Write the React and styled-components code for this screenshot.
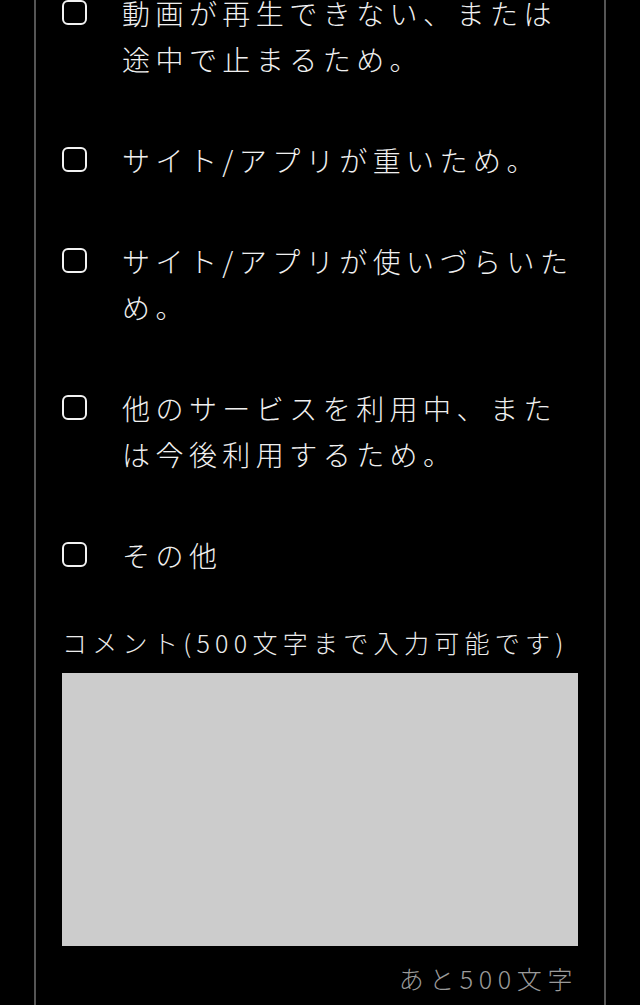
import styled, { createGlobalStyle } from 'styled-components';

const GlobalStyle = createGlobalStyle`
    html, body {
        margin: 0;
        padding: 0;
        background: #000;
    }
    body {
        font-family: "Noto Sans CJK JP", "Noto Sans", sans-serif;
        color: #efefef;
        overflow: hidden;
    }
`;

const Panel = styled.div`
    margin: 0 34px;
    min-height: 1040px;
    border-left: 2px solid #555;
    border-right: 2px solid #555;
    padding: 0 26px;
`;

const ReasonList = styled.ul`
    list-style: none;
    margin: -10px 0 0 0;
    padding: 0;
    display: flex;
    flex-direction: column;
    gap: 55px;
`;

const Reason = styled.li`
    display: flex;
    align-items: flex-start;
    gap: 35px;
`;

const Check = styled.input`
    appearance: none;
    flex: 0 0 25px;
    width: 25px;
    height: 25px;
    margin: 10px 0 0 0;
    border: 2px solid #f2f2f2;
    border-radius: 6px;
    background: transparent;
    box-sizing: border-box;
`;

const ReasonText = styled.label`
    flex: 1;
    font-size: 28px;
    line-height: 46px;
    letter-spacing: 5.45px;
    font-weight: 300;
    color: #f0f0f0;
`;

const CommentLabel = styled.label`
    display: block;
    margin: 46px 0 13px 0;
    font-size: 25px;
    line-height: 36px;
    letter-spacing: 5.3px;
    font-weight: 300;
    color: #ececec;
`;

const Comment = styled.textarea`
    display: block;
    width: 100%;
    height: 273px;
    margin: 0;
    padding: 10px;
    box-sizing: border-box;
    border: none;
    border-radius: 0;
    background: #cccccc;
    resize: none;
    font-family: inherit;
    font-size: 20px;
    outline: none;
`;

const Counter = styled.div`
    margin-top: 14px;
    text-align: right;
    font-size: 25px;
    line-height: 36px;
    letter-spacing: 5.6px;
    font-weight: 300;
    color: #9a9a9a;
`;

const reasons = [
    '動画が再生できない、または途中で止まるため。',
    'サイト/アプリが重いため。',
    'サイト/アプリが使いづらいため。',
    '他のサービスを利用中、または今後利用するため。',
    'その他',
];

const App = () => {
    return (
        <>
            <GlobalStyle />
            <Panel>
                <ReasonList>
                    {reasons.map((text, i) => (
                        <Reason key={i}>
                            <Check type="checkbox" id={`reason-${i}`} />
                            <ReasonText htmlFor={`reason-${i}`}>{text}</ReasonText>
                        </Reason>
                    ))}
                </ReasonList>
                <CommentLabel htmlFor="comment">コメント(500文字まで入力可能です)</CommentLabel>
                <Comment id="comment" maxLength={500} />
                <Counter>あと500文字</Counter>
            </Panel>
        </>
    );
};

export default App;
